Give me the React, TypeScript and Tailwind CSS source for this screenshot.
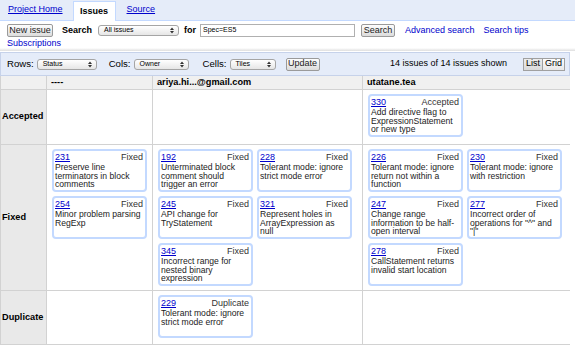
import React from 'react';

type Tile = { id: number; status: string; text: string };

const cols = ['----', 'ariya.hi...@gmail.com', 'utatane.tea'];

const rows: { label: string; h: string; cells: Tile[][] }[] = [
  {
    label: 'Accepted',
    h: 'h-[54px]',
    cells: [[], [], [{ id: 330, status: 'Accepted', text: 'Add directive flag to ExpressionStatement or new type' }]],
  },
  {
    label: 'Fixed',
    h: 'h-[145px]',
    cells: [
      [
        { id: 231, status: 'Fixed', text: 'Preserve line terminators in block comments' },
        { id: 254, status: 'Fixed', text: 'Minor problem parsing RegExp' },
      ],
      [
        { id: 192, status: 'Fixed', text: 'Unterminated block comment should trigger an error' },
        { id: 228, status: 'Fixed', text: 'Tolerant mode: ignore strict mode error' },
        { id: 245, status: 'Fixed', text: 'API change for TryStatement' },
        { id: 321, status: 'Fixed', text: 'Represent holes in ArrayExpression as null' },
        { id: 345, status: 'Fixed', text: 'Incorrect range for nested binary expression' },
      ],
      [
        { id: 226, status: 'Fixed', text: 'Tolerant mode: ignore return not within a function' },
        { id: 230, status: 'Fixed', text: 'Tolerant mode: ignore with restriction' },
        { id: 247, status: 'Fixed', text: 'Change range information to be half-open interval' },
        { id: 277, status: 'Fixed', text: 'Incorrect order of operations for "^" and "|"' },
        { id: 278, status: 'Fixed', text: 'CallStatement returns invalid start location' },
      ],
    ],
  },
  {
    label: 'Duplicate',
    h: 'h-[53px]',
    cells: [[], [{ id: 229, status: 'Duplicate', text: 'Tolerant mode: ignore strict mode error' }], []],
  },
];

function MacSelect({ label, w }: { label: string; w: string }) {
  return (
    <div className={`${w} h-[11px] flex items-center justify-between pl-[5px] pr-[4px] rounded-[3px] border border-[#a5a5a5] bg-gradient-to-b from-white to-[#e6e6e6] text-[7px]`}>
      <span>{label}</span>
      <svg width="4" height="7" viewBox="0 0 4 7">
        <path d="M0 3 L2 0.5 L4 3 Z M0 4 L2 6.5 L4 4 Z" fill="#333" />
      </svg>
    </div>
  );
}

function Btn({ children, cls = '' }: { children: React.ReactNode; cls?: string }) {
  return (
    <div className={`h-[13px] flex items-center whitespace-nowrap border border-[#9a9a9a] rounded-[2px] bg-gradient-to-b from-[#fdfdfd] to-[#dcdcdc] text-[#222] ${cls}`}>
      {children}
    </div>
  );
}

function Card({ t }: { t: Tile }) {
  return (
    <div className="w-[95px] h-[43px] border-2 border-[#c3d9ff] rounded-[4px] bg-white pl-[1px] pr-[2px] pt-[1px] overflow-hidden">
      <div className="flex justify-between leading-[11px] text-[9px]">
        <a className="text-[#0000cc] underline">{t.id}</a>
        <span className="text-[#333]">{t.status}</span>
      </div>
      <div className="text-[8.6px] leading-[8.5px] text-[#222]">{t.text}</div>
    </div>
  );
}

export default function App() {
  return (
    <div className="w-[575px] h-[348px] overflow-hidden bg-white text-[9px] text-black font-['Liberation_Sans',Arial,sans-serif]">
      {/* TABS */}
      <div className="h-[21px] bg-[#e5ecf9] border-b border-[#c3d9ff] flex items-end pl-[8px]">
        <a className="mb-[4px] text-[9px] text-[#0000cc] underline">Project Home</a>
        <div className="ml-[10px] w-[43px] h-[20px] -mb-px bg-white border border-b-0 border-[#c3d9ff] flex items-center justify-center font-bold text-[9px]">
          Issues
        </div>
        <a className="ml-[11px] mb-[4px] text-[9px] text-[#0000cc] underline">Source</a>
      </div>

      {/* SEARCH */}
      <div className="h-[17px] flex items-center pl-[7px] mt-[1px]">
        <Btn cls="w-[46px] justify-center">New issue</Btn>
        <span className="ml-[9px] font-bold">Search</span>
        <div className="ml-[6px]">
          <MacSelect label="All issues" w="w-[81px]" />
        </div>
        <span className="ml-[5px] font-bold">for</span>
        <div className="ml-[4px] w-[155px] h-[13px] border border-[#b0b0b0] bg-white flex items-center pl-[2px] text-[7px]">
          Spec=ES5
        </div>
        <Btn cls="ml-[6px] w-[34px] justify-center">Search</Btn>
        <a className="ml-[10px] text-[#0000cc]">Advanced search</a>
        <a className="ml-[9px] text-[#0000cc]">Search tips</a>
      </div>
      <div className="pl-[7px] h-[9px] leading-[9px]">
        <a className="text-[#0000cc]">Subscriptions</a>
      </div>
      <div className="h-[3px] bg-gradient-to-b from-white to-[#dedede]" />

      {/* TOOLBAR */}
      <div className="mt-[1px] w-[570px] h-[24px] bg-[#e5ecf9] border border-[#c6d2ea] flex items-center pl-[6px] pr-[4px] text-[9.6px]">
        <span>Rows:</span>
        <div className="ml-[3px]"><MacSelect label="Status" w="w-[60px]" /></div>
        <span className="ml-[12px]">Cols:</span>
        <div className="ml-[3px]"><MacSelect label="Owner" w="w-[55px]" /></div>
        <span className="ml-[14px]">Cells:</span>
        <div className="ml-[3px]"><MacSelect label="Tiles" w="w-[46px]" /></div>
        <Btn cls="ml-[10px] w-[34px] justify-center text-[9px]">Update</Btn>
        <span className="ml-auto mr-[16px] text-[9px]">14 issues of 14 issues shown</span>
        <div className="flex text-[9px]">
          <div className="h-[13px] px-[2px] flex items-center border border-[#a0a0a0] bg-gradient-to-b from-[#ececec] to-[#dadada]">List</div>
          <div className="h-[13px] px-[2px] flex items-center border border-l-0 border-[#a0a0a0] bg-gradient-to-b from-[#fdfdfd] to-[#e8e8e8]">Grid</div>
        </div>
      </div>

      {/* GRID */}
      <div className="w-[570px] grid grid-cols-[45px_105px_209px_207px] gap-px bg-[#d2d2d2] border border-t-0 border-[#d2d2d2]">
        <div className="h-[13px] bg-[#f0f0f0]" />
        {cols.map((c) => (
          <div key={c} className="h-[13px] bg-[#f0f0f0] font-bold pl-[4px] leading-[13px] text-[9.2px]">{c}</div>
        ))}
        {rows.map((r) => (
          <React.Fragment key={r.label}>
            <div className={`${r.h} bg-[#e9e9e9] flex items-center pl-[1px] font-bold text-[9.2px]`}>{r.label}</div>
            {r.cells.map((cell, i) => (
              <div key={i} className={`${r.h} bg-white flex flex-wrap content-start gap-[4px] pt-[4px] pl-[5px]`}>
                {cell.map((t) => (
                  <Card key={t.id} t={t} />
                ))}
              </div>
            ))}
          </React.Fragment>
        ))}
      </div>
    </div>
  );
}
